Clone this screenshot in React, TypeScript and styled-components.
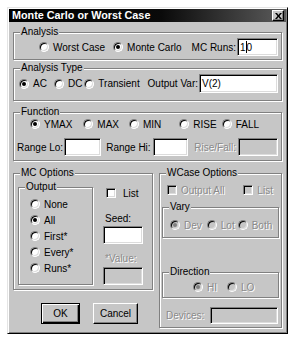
import React from 'react'
import styled, { createGlobalStyle, css } from 'styled-components'

const FACE = '#c6c6c6'

const GlobalStyle = createGlobalStyle`
  html, body { margin: 0; padding: 0; background: #fff; }
  body {
    font-family: 'Liberation Sans', Arial, sans-serif;
    font-size: 10px;
    color: #000;
  }
  * { box-sizing: border-box; }
`

const disabledText = css`
  color: #8a8a8a;
  text-shadow: 1px 1px 0 #fff;
`

const Window = styled.div`
  margin: 7px 0 0 7px;
  width: 281px;
  height: 327px;
  padding: 1px;
  background: ${FACE};
  border: 1px solid;
  border-color: #e4e4e4 #000 #000 #e4e4e4;
  box-shadow: inset 1px 1px 0 #fff, inset -1px -1px 0 #808080;
`

const TitleBar = styled.div`
  height: 13px;
  display: flex;
  align-items: center;
  justify-content: space-between;
  padding: 0 2px 0 3px;
  background: linear-gradient(90deg, #000 0%, #0a0a0a 55%, #5c5c5c 100%);
`

const Title = styled.span`
  color: #fff;
  font-weight: bold;
  font-size: 10.8px;
  line-height: 13px;
`

const CloseButton = styled.div`
  width: 12px;
  height: 11px;
  display: flex;
  align-items: center;
  justify-content: center;
  background: ${FACE};
  border: 1px solid;
  border-color: #fff #000 #000 #fff;
  box-shadow: inset -1px -1px 0 #808080;
`

const Content = styled.div`
  padding: 4px 4px 0;
  display: flex;
  flex-direction: column;
`

const Group = styled.fieldset<{ $mt?: number; $pb?: number; $w?: number; $ml?: number }>`
  margin: ${p => p.$mt ?? 0}px 0 0 ${p => p.$ml ?? 0}px;
  padding: 0 0 ${p => p.$pb ?? 0}px 0;
  min-width: 0;
  ${p => (p.$w ? `width: ${p.$w}px;` : '')}
  border: 1px solid #808080;
  box-shadow: inset 1px 1px 0 #fff, 1px 1px 0 #fff;
`

const Legend = styled.legend`
  margin-left: 6px;
  padding: 0 1px;
  line-height: 12px;
  font-size: 10px;
  background: ${FACE};
`

const Row = styled.div<{ $h: number; $mt?: number; $pl?: number; $pr?: number }>`
  display: flex;
  align-items: center;
  height: ${p => p.$h}px;
  margin-top: ${p => p.$mt ?? 0}px;
  padding: 0 ${p => p.$pr ?? 0}px 0 ${p => p.$pl ?? 0}px;
  white-space: nowrap;
`

const Choice = styled.label<{ $ml?: number; $gap?: number; $disabled?: boolean }>`
  display: flex;
  align-items: center;
  gap: ${p => p.$gap ?? 4}px;
  margin-left: ${p => p.$ml ?? 0}px;
  white-space: nowrap;
  ${p => p.$disabled && disabledText}
`

const RadioCircle = styled.span<{ $checked?: boolean; $disabled?: boolean }>`
  flex: none;
  width: 10px;
  height: 10px;
  border-radius: 50%;
  display: flex;
  align-items: center;
  justify-content: center;
  border: 1px solid;
  border-color: #808080 #fff #fff #808080;
  background: ${p => (p.$disabled ? FACE : '#fff')};
  box-shadow: inset 1px 1px 0 #000, inset -1px -1px 0 #dcdcdc;
  &::after {
    content: '';
    width: 4px;
    height: 4px;
    border-radius: 50%;
    background: ${p => (p.$disabled ? '#808080' : '#000')};
    display: ${p => (p.$checked ? 'block' : 'none')};
  }
`

const CheckSquare = styled.span<{ $disabled?: boolean }>`
  flex: none;
  width: 10px;
  height: 10px;
  border: 1px solid;
  border-color: #808080 #fff #fff #808080;
  background: ${p => (p.$disabled ? FACE : '#fff')};
  box-shadow: inset 1px 1px 0 #000, inset -1px -1px 0 #dcdcdc;
`

const Label = styled.span<{ $ml?: number; $disabled?: boolean }>`
  margin-left: ${p => p.$ml ?? 0}px;
  white-space: nowrap;
  ${p => p.$disabled && disabledText}
`

const Field = styled.div<{ $ml?: number; $auto?: boolean; $gap?: number }>`
  display: flex;
  align-items: center;
  gap: ${p => p.$gap ?? 1}px;
  margin-left: ${p => (p.$auto ? 'auto' : `${p.$ml ?? 0}px`)};
`

const TextBox = styled.div<{ $w: number; $h?: number; $disabled?: boolean }>`
  width: ${p => p.$w}px;
  height: ${p => p.$h ?? 18}px;
  display: flex;
  align-items: center;
  padding-left: 2px;
  border: 1px solid;
  border-color: #808080 #fff #fff #808080;
  background: ${p => (p.$disabled ? FACE : '#fff')};
  box-shadow: inset 1px 1px 0 #000, inset -1px -1px 0 #dcdcdc;
  font-size: 10px;
`

const Caret = styled.span`
  display: inline-block;
  width: 1px;
  height: 12px;
  background: #000;
  vertical-align: middle;
`

const Bottom = styled.div`
  display: flex;
  gap: 6px;
  margin-top: 6px;
`

const Column = styled.div<{ $w?: number; $ml?: number }>`
  display: flex;
  flex-direction: column;
  ${p => (p.$w ? `width: ${p.$w}px;` : '')}
  margin-left: ${p => p.$ml ?? 0}px;
`

const Inner = styled.div<{ $pl?: number }>`
  display: flex;
  padding-left: ${p => p.$pl ?? 0}px;
`

const Button = styled.div<{ $w: number; $ml?: number; $default?: boolean }>`
  width: ${p => p.$w}px;
  height: 21px;
  margin-left: ${p => p.$ml ?? 0}px;
  display: flex;
  align-items: center;
  justify-content: center;
  font-size: 10px;
  background: ${FACE};
  border: 1px solid;
  border-color: ${p => (p.$default ? '#000' : '#fff #000 #000 #fff')};
  box-shadow: ${p =>
    p.$default
      ? 'inset 1px 1px 0 #fff, inset -1px -1px 0 #000, inset -2px -2px 0 #808080'
      : 'inset -1px -1px 0 #808080'};
`

type RadioProps = { label: string; checked?: boolean; disabled?: boolean; ml?: number }

const Radio = ({ label, checked, disabled, ml }: RadioProps) => (
  <Choice $ml={ml} $disabled={disabled}>
    <RadioCircle $checked={checked} $disabled={disabled} />
    {label}
  </Choice>
)

type CheckProps = { label: string; disabled?: boolean; ml?: number; gap?: number }

const Check = ({ label, disabled, ml, gap }: CheckProps) => (
  <Choice $ml={ml} $gap={gap} $disabled={disabled}>
    <CheckSquare $disabled={disabled} />
    {label}
  </Choice>
)

export default function App() {
  return (
    <>
      <GlobalStyle />
      <Window>
        <TitleBar>
          <Title>Monte Carlo or Worst Case</Title>
          <CloseButton>
            <svg width="7" height="6" viewBox="0 0 7 6">
              <path d="M0 0h2l1.5 2 1.5-2h2L4.5 3 7 6H5L3.5 4 2 6H0l2.5-3z" fill="#000" />
            </svg>
          </CloseButton>
        </TitleBar>

        <Content>
          <Group $pb={3}>
            <Legend>Analysis</Legend>
            <Row $h={18} $pr={3}>
              <Radio label="Worst Case" ml={25} />
              <Radio label="Monte Carlo" checked ml={8} />
              <Field $auto>
                <Label>MC Runs:</Label>
                <TextBox $w={41}>
                  1<Caret />0
                </TextBox>
              </Field>
            </Row>
          </Group>

          <Group $mt={2} $pb={7}>
            <Legend>Analysis Type</Legend>
            <Row $h={19} $pr={3}>
              <Radio label="AC" checked ml={5} />
              <Radio label="DC" ml={7} />
              <Radio label="Transient" ml={2} />
              <Field $auto>
                <Label>Output Var:</Label>
                <TextBox $w={79} $h={19}>V(2)</TextBox>
              </Field>
            </Row>
          </Group>

          <Group $mt={5} $pb={4}>
            <Legend>Function</Legend>
            <Row $h={12}>
              <Radio label="YMAX" checked ml={16} />
              <Radio label="MAX" ml={11} />
              <Radio label="MIN" ml={10} />
              <Radio label="RISE" ml={18} />
              <Radio label="FALL" ml={5} />
            </Row>
            <Row $h={18} $mt={8} $pl={3} $pr={3}>
              <Field>
                <Label>Range Lo:</Label>
                <TextBox $w={37} />
              </Field>
              <Field $ml={5} $gap={2}>
                <Label>Range Hi:</Label>
                <TextBox $w={35} />
              </Field>
              <Field $auto $gap={2}>
                <Label $disabled>Rise/Fall:</Label>
                <TextBox $w={40} $disabled />
              </Field>
            </Row>
          </Group>

          <Bottom>
            <Column $w={140}>
              <Group $pb={4}>
                <Legend>MC Options</Legend>
                <Inner $pl={4}>
                  <Group $w={75} $mt={2} $pb={7}>
                    <Legend>Output</Legend>
                    <Column $ml={11}>
                      <Row $h={16} $mt={3}>
                        <Radio label="None" />
                      </Row>
                      <Row $h={16}>
                        <Radio label="All" checked />
                      </Row>
                      <Row $h={16}>
                        <Radio label="First*" />
                      </Row>
                      <Row $h={16}>
                        <Radio label="Every*" />
                      </Row>
                      <Row $h={16}>
                        <Radio label="Runs*" />
                      </Row>
                    </Column>
                  </Group>
                  <Column $ml={10}>
                    <Row $h={12} $mt={8} $pl={3}>
                      <Check label="List" gap={7} />
                    </Row>
                    <Row $h={12} $mt={13} $pl={2}>
                      <Label>Seed:</Label>
                    </Row>
                    <TextBox $w={40} style={{ marginTop: 2 }} />
                    <Row $h={12} $mt={8} $pl={2}>
                      <Label $disabled>*Value:</Label>
                    </Row>
                    <TextBox $w={40} $disabled style={{ marginTop: 3 }} />
                  </Column>
                </Inner>
              </Group>
              <Row $h={21} $mt={13} $pl={28}>
                <Button $w={39} $default>OK</Button>
                <Button $w={45} $ml={13}>Cancel</Button>
              </Row>
            </Column>

            <Column $w={123}>
              <Group $pb={3}>
                <Legend>WCase Options</Legend>
                <Row $h={12} $mt={5} $pl={7}>
                  <Check label="Output All" disabled />
                  <Check label="List" disabled ml={19} />
                </Row>
                <Group $mt={5} $ml={2} $w={117} $pb={6}>
                  <Legend>Vary</Legend>
                  <Row $h={12} $mt={6}>
                    <Radio label="Dev" checked disabled ml={7} />
                    <Radio label="Lot" disabled ml={5} />
                    <Radio label="Both" disabled ml={3} />
                  </Row>
                </Group>
                <Group $mt={28} $ml={2} $w={117} $pb={4}>
                  <Legend>Direction</Legend>
                  <Row $h={12} $mt={3}>
                    <Radio label="HI" checked disabled ml={30} />
                    <Radio label="LO" disabled ml={10} />
                  </Row>
                </Group>
                <Row $h={17} $mt={9} $pl={6} $pr={3}>
                  <Label $disabled>Devices:</Label>
                  <Field $auto>
                    <TextBox $w={68} $h={17} $disabled />
                  </Field>
                </Row>
              </Group>
            </Column>
          </Bottom>
        </Content>
      </Window>
    </>
  )
}
